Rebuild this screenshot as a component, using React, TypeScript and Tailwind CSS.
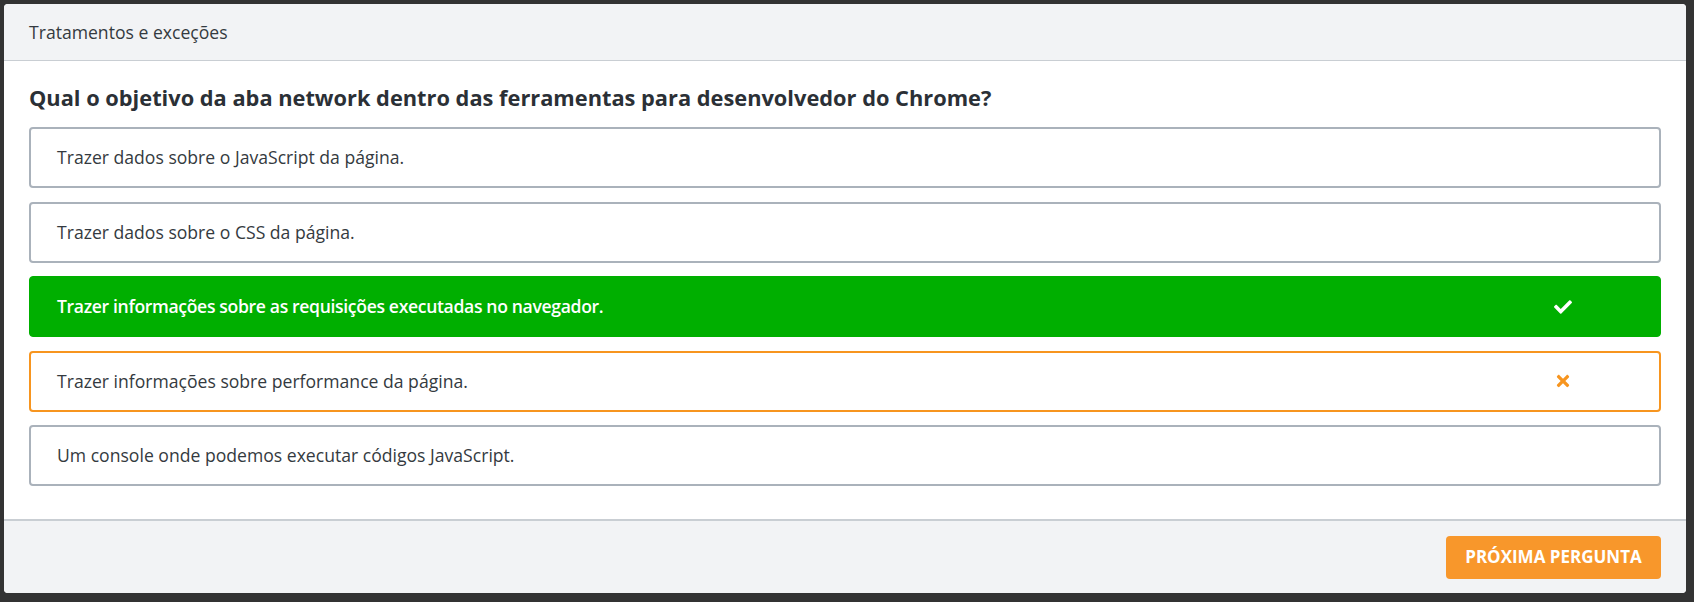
import { FaCheck, FaTimes } from "react-icons/fa";

type OptionState = "default" | "correct" | "wrong";

interface OptionType {
  id: number;
  text: string;
  state: OptionState;
}

const options: OptionType[] = [
  { id: 1, text: "Trazer dados sobre o JavaScript da página.", state: "default" },
  { id: 2, text: "Trazer dados sobre o CSS da página.", state: "default" },
  {
    id: 3,
    text: "Trazer informações sobre as requisições executadas no navegador.",
    state: "correct",
  },
  { id: 4, text: "Trazer informações sobre performance da página.", state: "wrong" },
  { id: 5, text: "Um console onde podemos executar códigos JavaScript.", state: "default" },
];

function Option({ option }: { option: OptionType }) {
  const base =
    "h-[61px] rounded-[4px] flex items-center justify-between pl-[27px] pr-[88px] text-[17.6px]";

  if (option.state === "correct") {
    return (
      <div className={`${base} bg-[#00af00] border border-[#00af00] text-white font-semibold tracking-[-0.35px]`}>
        <span>{option.text}</span>
        <FaCheck className="text-[18px] text-white" />
      </div>
    );
  }

  if (option.state === "wrong") {
    return (
      <div className={`${base} bg-white border-2 border-[#f7951f] text-[#343a40]`}>
        <span className="-ml-[1px]">{option.text}</span>
        <FaTimes className="text-[18px] text-[#f7951f] -mr-[1px]" />
      </div>
    );
  }

  return (
    <div className={`${base} bg-white border-2 border-[#aab2bb] text-[#343a40]`}>
      <span className="-ml-[1px]">{option.text}</span>
    </div>
  );
}

export default function App() {
  return (
    <div
      className="w-full h-[602px] bg-[#333333] pt-[4px] pl-[4px] pr-[8px] pb-[9px]"
      style={{ fontFamily: '"Open Sans", "Noto Sans", sans-serif' }}
    >
      <div className="h-full bg-white rounded-[4px] overflow-hidden flex flex-col">
        {/* Header */}
        <div className="h-[57px] shrink-0 bg-[#f2f3f5] border-b border-[#c9ced3] px-[25px] flex items-center">
          <span className="text-[17.6px] text-[#343a40]">Tratamentos e exceções</span>
        </div>

        {/* Question + options */}
        <div className="flex-1 px-[25px] pt-[22px]">
          <h2 className="text-[21.8px] leading-[30px] font-bold text-[#2b3036] mb-[14px]">
            Qual o objetivo da aba network dentro das ferramentas para desenvolvedor do Chrome?
          </h2>
          <div className="flex flex-col gap-[13.5px]">
            {options.map((option) => (
              <Option key={option.id} option={option} />
            ))}
          </div>
        </div>

        {/* Footer */}
        <div className="h-[74px] shrink-0 bg-[#f2f3f5] border-t-2 border-[#c9ced3] px-[25px] flex items-center justify-end">
          <button className="h-[43px] w-[215px] rounded-[4px] bg-[#f8972b] text-white font-bold text-[17px] uppercase">
            Próxima pergunta
          </button>
        </div>
      </div>
    </div>
  );
}
